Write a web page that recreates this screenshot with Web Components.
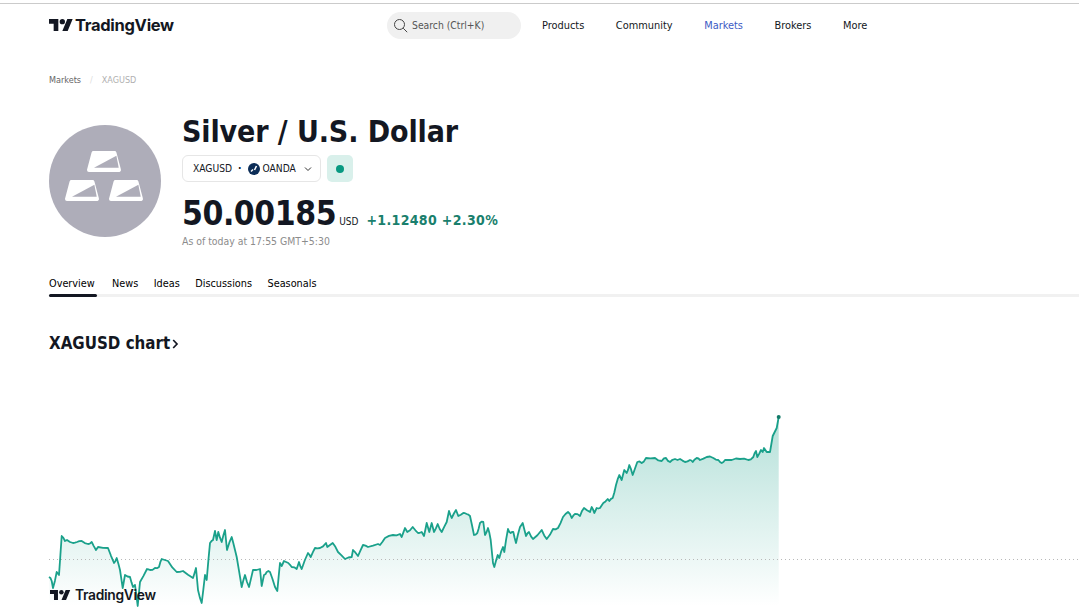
<!DOCTYPE html>
<html lang="en">
<head>
<meta charset="utf-8">
<title>XAGUSD</title>
<style>
  html, body { margin: 0; height: 100%; overflow: hidden; background: #fff; }
  body { font-family: "DejaVu Sans Condensed", "DejaVu Sans", sans-serif; color: #131722; border-top: 1px solid #fff; }
</style>
</head>
<body>
<tv-page>
  <tv-header></tv-header>
  <tv-crumbs></tv-crumbs>
  <symbol-head></symbol-head>
  <tv-tabs></tv-tabs>
  <section-title>XAGUSD chart</section-title>
  <tv-chart></tv-chart>
</tv-page>

<script>
const LOGO = `<svg viewBox="0 0 36 18" width="24" height="12" fill="#131722"><path d="M14 18H7V7H0V0h14v18zM28 18h-8l7.5-18h8L28 18z"/><circle cx="20" cy="4" r="4"/></svg>`;

class TvPage extends HTMLElement {
  constructor() {
    super();
    this.attachShadow({mode: 'open'}).innerHTML = `
      <style>:host { display: flex; flex-direction: column; }</style>
      <slot></slot>`;
  }
}

class TvHeader extends HTMLElement {
  constructor() {
    super();
    let items = ['Products', 'Community', 'Markets', 'Brokers', 'More'];
    this.attachShadow({mode: 'open'}).innerHTML = `
      <style>
        :host { display: flex; align-items: center; height: 42px; border-top: 1px solid #cbcbcb; margin-top: 2px; padding: 0 0 0 49px; }
        .logo { display: flex; align-items: center; gap: 2px; width: 338px; font: 700 16.5px Inter, sans-serif; letter-spacing: -.3px; color: #131722; }
        .search { display: flex; align-items: center; gap: 4px; box-sizing: border-box; width: 134px; height: 27px; padding-left: 6px; border-radius: 14px; background: #f0f0f0; font-size: 10.3px; color: #555; }
        nav { display: flex; margin-left: 21px; gap: 31.6px; font-size: 10.9px; color: #131722; }
        nav .on { color: #3d5bc4; }
      </style>
      <div class="logo">${LOGO}<span>TradingView</span></div>
      <div class="search">
        <svg width="15" height="15" viewBox="0 0 15 15" fill="none" stroke="#444" stroke-width="1"><circle cx="6.5" cy="6.5" r="5"/><path d="M10.2 10.2l4 4"/></svg>
        <span>Search (Ctrl+K)</span>
      </div>
      <nav>${items.map(i => `<span class="${i == 'Markets' ? 'on' : ''}">${i}</span>`).join('')}</nav>`;
  }
}

class TvCrumbs extends HTMLElement {
  constructor() {
    super();
    this.attachShadow({mode: 'open'}).innerHTML = `
      <style>
        :host { display: flex; align-items: center; height: 12px; margin: 28px 0 0 49px; font-size: 9px; color: #666; }
        i { font-style: normal; color: #ddd; margin: 0 9px; }
        b { font-weight: normal; color: #b0b0b0; }
      </style>
      <span>Markets</span><i>/</i><b>XAGUSD</b>`;
  }
}

class SymbolHead extends HTMLElement {
  constructor() {
    super();
    let bar = (x, y) => `<g transform="translate(${x} ${y})">
      <path d="M6.5 2H27.5L32 19H2Z" fill="#fff" stroke="#fff" stroke-width="4" stroke-linejoin="round"/>
      <path d="M7 16.7L29.4 4.7L31.7 16.7Z" fill="#aeadb9"/></g>`;
    this.attachShadow({mode: 'open'}).innerHTML = `
      <style>
        :host { display: flex; margin: 39px 0 0 49px; height: 147px; }
        .avatar { flex: none; width: 112px; height: 112px; }
        .info { margin: -9px 0 0 21px; display: flex; flex-direction: column; }
        h1 { margin: 0; height: 30px; line-height: 32px; font-size: 30px; font-weight: 700; letter-spacing: -.1px; color: #131722; white-space: nowrap; }
        .row { display: flex; gap: 6px; margin-top: 9px; }
        .pill { display: flex; align-items: center; box-sizing: border-box; width: 139px; height: 27px; padding-left: 10px; border: 1px solid #e6e6e6; border-radius: 6px; font-size: 10.2px; }
        .pill .dot { margin: 0 6px; font-weight: 700; }
        .pill svg { margin-right: 3px; }
        .pill .chev { margin: 0 0 0 8px; }
        .live { display: flex; align-items: center; justify-content: center; width: 26px; height: 27px; border-radius: 5px; background: #d9f0eb; }
        .live span { width: 8px; height: 8px; border-radius: 50%; background: #089981; }
        .price { display: flex; align-items: baseline; margin-top: 14px; height: 36px; white-space: nowrap; }
        .last { font-size: 33.4px; line-height: 36px; font-weight: 700; letter-spacing: -.45px; color: #131722; }
        .cur { margin: 0 8px 0 3px; font-size: 10px; }
        .chg { font-size: 14px; font-weight: 700; letter-spacing: .35px; color: #1a7f6d; }
        .asof { margin-top: 3px; font-size: 10.4px; color: #8c8c8c; }
      </style>
      <svg class="avatar" viewBox="0 0 112 112">
        <circle cx="56" cy="56" r="56" fill="#aeadb9"/>
        ${bar(38, 26)}${bar(16, 55)}${bar(60, 55)}
      </svg>
      <div class="info">
        <h1>Silver / U.S. Dollar</h1>
        <div class="row">
          <div class="pill">
            <span>XAGUSD</span><span class="dot">·</span>
            <svg width="12" height="12" viewBox="0 0 12 12"><circle cx="6" cy="6" r="6" fill="#0c2d57"/><path d="M3 8.5L5 6.5" stroke="#fff" stroke-width="1.4"/><path d="M6.5 7L8.5 3" stroke="#fff" stroke-width="1.6"/></svg>
            <span>OANDA</span>
            <svg class="chev" width="8" height="6" viewBox="0 0 8 6" fill="none" stroke="#333" stroke-width="1"><path d="M1 1.5l3 3 3-3"/></svg>
          </div>
          <div class="live"><span></span></div>
        </div>
        <div class="price">
          <span class="last">50.00185</span><span class="cur">USD</span><span class="chg">+1.12480 +2.30%</span>
        </div>
        <div class="asof">As of today at 17:55 GMT+5:30</div>
      </div>`;
  }
}

class TvTabs extends HTMLElement {
  constructor() {
    super();
    let tabs = ['Overview', 'News', 'Ideas', 'Discussions', 'Seasonals'];
    this.attachShadow({mode: 'open'}).innerHTML = `
      <style>
        :host { display: flex; gap: 15.5px; height: 22px; margin-left: 49px; border-bottom: 3px solid #f1f1f1; font-size: 10.8px; color: #000; }
        span { position: relative; height: 22px; line-height: 23px; }
        .on { min-width: 47.5px; }
        .on::after { content: ""; position: absolute; left: 0; right: 0; bottom: -3px; height: 3px; border-radius: 2px; background: #131722; }
      </style>
      ${tabs.map((t, i) => `<span class="${i ? '' : 'on'}">${t}</span>`).join('')}`;
  }
}

class SectionTitle extends HTMLElement {
  constructor() {
    super();
    this.attachShadow({mode: 'open'}).innerHTML = `
      <style>
        :host { display: flex; align-items: center; gap: 2px; height: 24px; margin: 34px 0 5px 49px; font-size: 16.8px; font-weight: 700; color: #131722; }
      </style>
      <slot></slot>
      <svg width="7" height="10" viewBox="0 0 7 10" fill="none" stroke="#131722" stroke-width="1.7" style="margin-top:2px"><path d="M1.2 1l3.8 4-3.8 4"/></svg>`;
  }
}

// page coordinates of the price line, read off the picture
const PTS = [[49,577],[51.7,581],[53,588],[56.7,572],[59,575],[61.7,536],[65,541],[67,540],[73,543],[77,542],[81.7,541],[88,544],[91.7,542],[96,550],[98,547],[108,548],[114,563],[116.7,558],[120,570],[122.7,588],[125,575],[130,577],[133,587],[135,585],[137.7,606],[140,582],[147,569],[150,570],[155,568],[159,567],[161.7,559],[168,561],[176.7,572],[183,571],[193,578],[196,568],[198,590],[201.7,603],[205,575],[206.7,580],[210,543],[213,540],[215,531],[216.7,540],[218.3,532],[221.7,542],[225,530],[227,550],[231.7,537],[235,550],[236.7,557],[241.7,587],[245,575],[249,587],[253,570],[260,569],[261.7,586],[264,575],[266.7,572],[270,572],[275,587],[277.3,591],[280,563],[281.7,566],[284,561],[288.3,563],[291.7,567],[296.7,569],[299,562],[301.7,569],[308,553],[310.7,557],[315,548],[320,548],[326,543],[327.3,547],[332.7,543],[338,552],[345,559],[351.7,557],[353,550],[358,556],[363,545],[368,547],[378,544],[380,545],[385,538],[393,535],[400,534],[401.7,537],[405,528],[407.3,532],[412.7,527],[418,533],[421.7,532],[424,536],[426.7,523],[429.3,532],[431.7,523],[434,532],[437.7,524],[441.7,532],[446.7,522],[449,511],[451.7,518],[456,510],[458.3,516],[463.3,513],[466.7,514],[470,516],[474,535],[477.3,533],[480,523],[483.3,522],[485,535],[488,528],[490.7,540],[493,563],[494.3,567],[497.7,555],[499.3,558],[503,547],[504.3,552],[508,529],[510.7,533],[513.3,532],[516,543],[520,527],[522.7,523],[526,536],[529,532],[533,539],[541.7,530],[546.7,539],[553,529],[558,528],[563,517],[568,512],[571.7,518],[575,514],[580,516],[584,508],[590,512],[591.7,507],[594.3,513],[596.7,508],[600,508],[603.3,503],[607.7,499],[609.3,501],[612.7,498],[616,485],[619.3,475],[621.7,480],[624.3,470],[626.7,473],[629.3,465],[632.7,475],[637.3,462],[641.7,463],[646,458],[655,458],[661.7,461],[666,458],[670,462],[675,459],[680,459],[685,462],[690,460],[692.7,462],[696.7,458],[700,460],[706.7,457],[713.3,458],[718.3,460],[721.7,463],[725,460],[731.7,460],[740,459],[748.3,460],[753.3,457],[756,451],[757.3,457],[761,450],[762.7,452],[764,448],[766.7,452],[770,452],[772.7,436],[776.7,428],[778.7,417]];

class TvChart extends HTMLElement {
  constructor() {
    super();
    // small deterministic wiggle, the real line is noisier than the points above
    let seed = 7;
    let noise = () => (seed = (seed * 16807) % 2147483647) / 2147483647 - .5;
    let line = [];
    PTS.forEach((p, i) => {
      line.push(p);
      let next = PTS[i + 1];
      if (next && next[0] - p[0] > 2.5 && i < PTS.length - 8) {
        let mx = (p[0] + next[0]) / 2, my = (p[1] + next[1]) / 2;
        line.push([mx, Math.min(my + noise() * 2.2, 606)]);
      }
    });
    let d = line.map((p, i) => (i ? 'L' : 'M') + p[0].toFixed(1) + ' ' + p[1].toFixed(1)).join('');
    this.attachShadow({mode: 'open'}).innerHTML = `
      <style>
        :host { display: block; position: relative; height: 250px; flex: none; }
        svg.plot { display: block; }
        .mark { position: absolute; left: 50px; top: 227px; display: flex; align-items: center; gap: 4.5px; font: 600 13.8px Inter, sans-serif; letter-spacing: -.3px; color: #131722; }
      </style>
      <svg class="plot" width="1079" height="250" viewBox="0 360 1079 250">
        <defs>
          <linearGradient id="fade" gradientUnits="userSpaceOnUse" x1="0" y1="417" x2="0" y2="606">
            <stop offset="0" stop-color="#089981" stop-opacity=".3"/>
            <stop offset="1" stop-color="#089981" stop-opacity="0"/>
          </linearGradient>
        </defs>
        <path d="${d}L778.7 610L49 610Z" fill="url(#fade)"/>
        <path d="M49 559.5H1079" stroke="#b8b8b8" stroke-width="1" stroke-dasharray="1 3"/>
        <path d="${d}" fill="none" stroke="#089981" stroke-width="1.8" stroke-linejoin="round" opacity=".92"/>
        <circle cx="778.7" cy="417" r="2" fill="#127a68"/>
      </svg>
      <div class="mark"><svg viewBox="0 0 36 18" width="20.5" height="10.3" fill="#131722"><path d="M14 18H7V7H0V0h14v18zM28 18h-8l7.5-18h8L28 18z"/><circle cx="20" cy="4" r="4"/></svg><span>TradingView</span></div>`;
  }
}

customElements.define('tv-page', TvPage);
customElements.define('tv-header', TvHeader);
customElements.define('tv-crumbs', TvCrumbs);
customElements.define('symbol-head', SymbolHead);
customElements.define('tv-tabs', TvTabs);
customElements.define('section-title', SectionTitle);
customElements.define('tv-chart', TvChart);
</script>
</body>
</html>
